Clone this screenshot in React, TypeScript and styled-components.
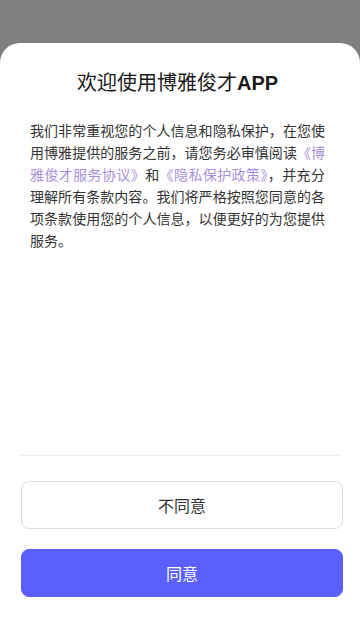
import styled, { createGlobalStyle } from 'styled-components';

const GlobalStyle = createGlobalStyle`
  html, body {
    margin: 0;
    padding: 0;
    background: #7f7f7f;
  }
  * {
    box-sizing: border-box;
  }
`;

export default function App() {
  return (
    <>
      <GlobalStyle />
      <SPage>
        <SSheet>
          <SContent>
            <STitle>
              欢迎使用博雅俊才<b>APP</b>
            </STitle>
            <SText>
              我们非常重视您的个人信息和隐私保护，在您使用博雅提供的服务之前，请您务必审慎阅读
              <SLink>《博雅俊才服务协议》</SLink>和<SLink>《隐私保护政策》</SLink>
              ，并充分理解所有条款内容。我们将严格按照您同意的各项条款使用您的个人信息，以便更好的为您提供服务。
            </SText>
          </SContent>
          <SDivider />
          <SFooter>
            <SButton>不同意</SButton>
            <SButton $primary>同意</SButton>
          </SFooter>
        </SSheet>
      </SPage>
    </>
  );
}

const SPage = styled.div`
  height: 622px;
  display: flex;
  flex-direction: column;
  padding-top: 43px;
  font-family: 'Noto Sans CJK SC', 'Noto Sans', sans-serif;
`;

const SSheet = styled.div`
  flex: 1;
  display: flex;
  flex-direction: column;
  background: #fff;
  border-radius: 20px 20px 0 0;
`;

const SContent = styled.div`
  flex: 1;
  padding: 25px 35px 0 30px;
`;

const STitle = styled.h1`
  margin: 0;
  font-size: 20px;
  line-height: 28px;
  font-weight: 400;
  color: #1a1a1a;
  text-align: center;
  b {
    font-family: 'Liberation Sans', Arial, sans-serif;
    font-weight: 700;
  }
`;

const SText = styled.p`
  margin: 22px 0 0;
  font-size: 14px;
  line-height: 22px;
  color: #333;
  text-align: justify;
`;

const SLink = styled.span`
  color: #a88fdc;
`;

const SDivider = styled.div`
  height: 1px;
  margin: 0 19px 0 20px;
  background: #eeeeee;
`;

const SFooter = styled.div`
  display: flex;
  flex-direction: column;
  gap: 20px;
  padding: 25px 17px 25px 21px;
`;

const SButton = styled.button<{ $primary?: boolean }>`
  height: 48px;
  width: 100%;
  border-radius: 8px;
  font-family: inherit;
  font-size: 16px;
  cursor: pointer;
  border: 1px solid ${(p) => (p.$primary ? '#5b5ffd' : '#dddddd')};
  background: ${(p) => (p.$primary ? '#5b5ffd' : '#fff')};
  color: ${(p) => (p.$primary ? '#fff' : '#333')};
`;
